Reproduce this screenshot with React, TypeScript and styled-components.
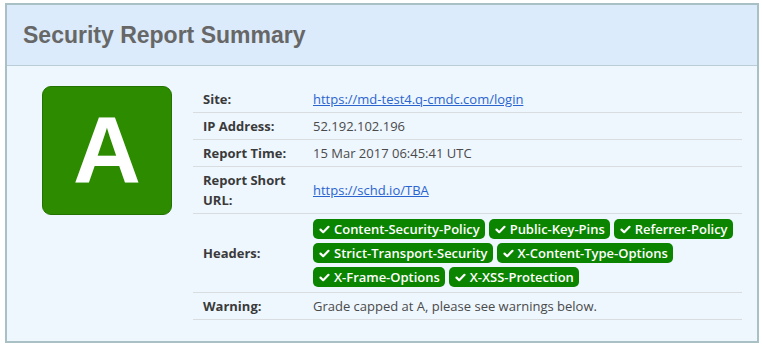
import styled, { createGlobalStyle } from "styled-components";

const Global = createGlobalStyle`
    body {
        margin: 0;
        background: #ffffff;
        font-family: "Open Sans", "Noto Sans", sans-serif;
    }
`;

const Panel = styled.section`
    margin: 3px 0 0 5px;
    width: 750px;
    border: 2px solid #a9c1c5;
    background-color: #eef6fe;
`;

const Header = styled.header`
    height: 60px;
    display: flex;
    align-items: center;
    padding: 0 16px;
    background-color: #dbebfb;
    border-bottom: 1px solid #b8cdd6;

    h2 {
        margin: 0;
        font-family: "Liberation Sans", Arial, sans-serif;
        font-size: 23px;
        font-weight: 700;
        color: #676767;
        padding-top: 1px;
    }
`;

const Body = styled.div`
    display: flex;
    align-items: flex-start;
    padding: 20px 15px 21px 35px;
    gap: 21px;
`;

const Grade = styled.div<{ $color: string }>`
    flex: 0 0 auto;
    width: 128px;
    height: 127px;
    border-radius: 9px;
    border: 1px solid #237300;
    background-color: ${p => p.$color};
    color: #ffffff;
    display: flex;
    align-items: center;
    justify-content: center;
    font-family: "Liberation Sans", Arial, sans-serif;
    font-weight: 700;
    font-size: 94px;
    line-height: 1;
`;

const Table = styled.table`
    flex: 1;
    border-collapse: collapse;
    font-size: 13px;
    line-height: 20px;

    tr + tr th,
    tr + tr td {
        border-top: 1px solid #d9dde0;
    }

    tr:last-child th,
    tr:last-child td {
        border-bottom: 1px solid #d9dde0;
    }

    th {
        width: 90px;
        text-align: left;
        font-weight: 700;
        color: #3a3a3a;
        padding: 3px 10px 3px 10px;
        vertical-align: middle;
    }

    td {
        color: #4a4a4a;
        padding: 3px 4px 3px 10px;
        vertical-align: middle;
    }

    a {
        color: #2a65cf;
    }
`;

const Badges = styled.div`
    display: flex;
    flex-wrap: wrap;
    gap: 4px 4px;
    padding: 2px 0;
`;

const Badge = styled.span`
    display: inline-flex;
    align-items: center;
    gap: 4px;
    height: 20px;
    padding: 0 5px 0 6px;
    border-radius: 5px;
    background-color: #0b8400;
    color: #ffffff;
    font-weight: 600;
    font-size: 13px;
    letter-spacing: -0.02px;
    white-space: nowrap;
`;

const Check = () => (
    <svg width={11} height={9} viewBox="0 0 11 9">
        <path d="M1.5 4.6 4.2 7.2 9.5 1.8" fill="none" stroke="#fff" strokeWidth={2.2} strokeLinecap="round" strokeLinejoin="round" />
    </svg>
);

const headers = [
    "Content-Security-Policy",
    "Public-Key-Pins",
    "Referrer-Policy",
    "Strict-Transport-Security",
    "X-Content-Type-Options",
    "X-Frame-Options",
    "X-XSS-Protection",
];

export default function App() {
    return (
        <>
            <Global />
            <Panel>
                <Header>
                    <h2>Security Report Summary</h2>
                </Header>
                <Body>
                    <Grade $color="#2d8b00">A</Grade>
                    <Table>
                        <tbody>
                            <tr>
                                <th>Site:</th>
                                <td><a href="#">https://md-test4.q-cmdc.com/login</a></td>
                            </tr>
                            <tr>
                                <th>IP Address:</th>
                                <td>52.192.102.196</td>
                            </tr>
                            <tr>
                                <th>Report Time:</th>
                                <td>15 Mar 2017 06:45:41 UTC</td>
                            </tr>
                            <tr>
                                <th>Report Short URL:</th>
                                <td><a href="#">https://schd.io/TBA</a></td>
                            </tr>
                            <tr>
                                <th>Headers:</th>
                                <td>
                                    <Badges>
                                        {headers.map(h => (
                                            <Badge key={h}><Check />{h}</Badge>
                                        ))}
                                    </Badges>
                                </td>
                            </tr>
                            <tr>
                                <th>Warning:</th>
                                <td>Grade capped at A, please see warnings below.</td>
                            </tr>
                        </tbody>
                    </Table>
                </Body>
            </Panel>
        </>
    );
}
